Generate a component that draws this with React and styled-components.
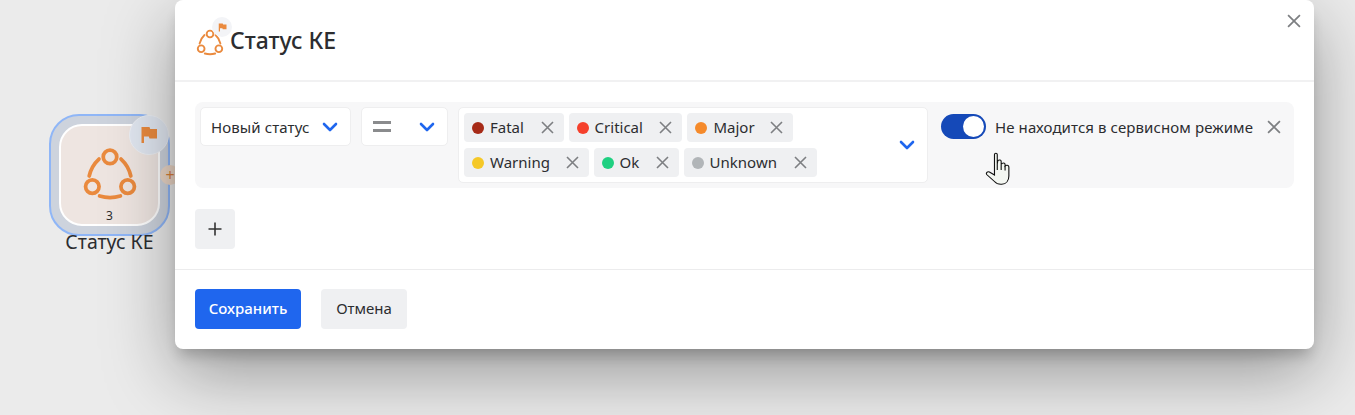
import React from "react";
import styled, { createGlobalStyle } from "styled-components";

const tags = [
  { name: "Fatal", color: "#a62a17", width: 99.6 },
  { name: "Critical", color: "#f5402c", width: 113.9 },
  { name: "Major", color: "#f58a2b", width: 106 },
  { name: "Warning", color: "#f5c827", width: 124.6 },
  { name: "Ok", color: "#1fd081", width: 85 },
  { name: "Unknown", color: "#b1b5b8", width: 133 },
];

const StatusIcon = ({ size, stroke = 3.6 }) => (
  <svg width={size} height={size} viewBox="0 0 50 50" fill="none" stroke="#ea8a3e" strokeWidth={stroke} strokeLinecap="round" overflow="visible">
    <circle cx="25" cy="11.5" r="6.5" />
    <circle cx="8" cy="40" r="6.5" />
    <circle cx="42" cy="40" r="6.5" />
    <path d="M14.4 13.5C10 17.5 6.5 23 5 29.8" />
    <path d="M35.6 13.5C40 17.5 43.5 23 45 29.8" />
    <path d="M15 49C21 50.8 29 50.8 35 49" />
  </svg>
);

const FlagIcon = ({ size }) => (
  <svg width={size} height={size} viewBox="0 0 18 18" fill="#ea8a3e">
    <path d="M1.5 1H9.5L10.2 3H17V12.5H9.5L8.8 10.5H4V17H1.5Z" />
  </svg>
);

const Chevron = () => (
  <svg width="16" height="10" viewBox="0 0 16 10" fill="none" stroke="#1f66ee" strokeWidth="2.6" strokeLinecap="round" strokeLinejoin="round">
    <path d="M2 2L8 8L14 2" />
  </svg>
);

const Cross = ({ size = 13, color = "#7d7f82" }) => (
  <svg width={size} height={size} viewBox="0 0 13 13" fill="none" stroke={color} strokeWidth="1.6">
    <path d="M1 1L12 12M12 1L1 12" />
  </svg>
);

const Hand = () => (
  <svg width="29" height="34" viewBox="0 0 26 34" preserveAspectRatio="none" fill="#f4f7f2" stroke="#111" strokeWidth="1">
    <path d="M8.5 2.5C8.5 0.8 11 0.8 11 2.5V12L11.5 8.5C13 7.6 14.5 8 14.5 9.5V12.5C15.5 10.5 18 10.5 18 12.5V14C19 12.8 21.4 13 21.4 15V24C21.4 28.5 19 32 15 32.3C11.5 32.6 10 31.5 8.5 29.5L1.5 22.5C0.6 21 2 19.2 4 20L8.5 23Z" />
    <path d="M14.5 12.5V18M18 14V18.5M11 12V18" fill="none" />
  </svg>
);

const App = () => (
  <Canvas>
    <GlobalStyle />
    <Node>
      <NodeFrame>
        <NodeCard>
          <StatusIcon size={52} stroke={3.6} />
          <NodeCount>3</NodeCount>
        </NodeCard>
        <FlagBadge>
          <FlagIcon size={18} />
        </FlagBadge>
        <AddHandle>+</AddHandle>
      </NodeFrame>
      <NodeLabel>Статус КЕ</NodeLabel>
    </Node>

    <Modal>
      <CloseButton>
        <Cross size={14} />
      </CloseButton>
      <Header>
        <TitleIcon>
          <StatusIcon size={26} />
          <SmallFlag>
            <FlagIcon size={9} />
          </SmallFlag>
        </TitleIcon>
        <Title>Статус КЕ</Title>
      </Header>

      <Body>
        <ConditionRow>
          <Select $width={151}>
            <span>Новый статус</span>
            <Chevron />
          </Select>
          <Select $width={87}>
            <EqualSign />
            <Chevron />
          </Select>
          <TagBox>
            <TagList>
              {tags.map((tag) => (
                <Tag key={tag.name} $width={tag.width}>
                  <Dot $color={tag.color} />
                  <TagName>{tag.name}</TagName>
                  <Cross />
                </Tag>
              ))}
            </TagList>
            <Chevron />
          </TagBox>
          <ToggleGroup>
            <Toggle />
            <ToggleLabel>Не находится в сервисном режиме</ToggleLabel>
            <Cross size={14} />
          </ToggleGroup>
          <Cursor>
            <Hand />
          </Cursor>
        </ConditionRow>
        <AddButton>
          <svg width="14" height="14" viewBox="0 0 14 14" stroke="#333" strokeWidth="1.6">
            <path d="M7 0.5V13.5M0.5 7H13.5" />
          </svg>
        </AddButton>
      </Body>

      <Footer>
        <SaveButton>Сохранить</SaveButton>
        <CancelButton>Отмена</CancelButton>
      </Footer>
    </Modal>
  </Canvas>
);

export default App;

const GlobalStyle = createGlobalStyle`
  html, body {
    margin: 0;
    padding: 0;
  }

  * {
    box-sizing: border-box;
  }

  body {
    font-family: "Noto Sans", "Open Sans", sans-serif;
    color: #2c2d30;
  }
`;

const Canvas = styled.div`
  position: relative;
  width: 1355px;
  height: 415px;
  overflow: hidden;
  background: #ebebeb;
`;

const Node = styled.div`
  position: absolute;
  left: 49px;
  top: 114px;
  width: 121px;
`;

const NodeFrame = styled.div`
  position: relative;
  width: 121px;
  height: 122px;
  padding: 8px;
  border: 2px solid #8fb6f7;
  border-radius: 30px;
  background: #cdd3dd;
`;

const NodeCard = styled.div`
  position: relative;
  display: flex;
  justify-content: center;
  padding-top: 19px;
  width: 101px;
  height: 102px;
  border: 2px solid #fff;
  border-radius: 23px;
  background: #eee5e1;
`;

const NodeCount = styled.span`
  position: absolute;
  left: 0;
  right: 0;
  bottom: 0;
  font-size: 12px;
  line-height: 16px;
  text-align: center;
`;

const FlagBadge = styled.div`
  position: absolute;
  right: -1px;
  top: -1px;
  width: 40px;
  height: 40px;
  display: flex;
  align-items: center;
  justify-content: center;
  border: 1px solid #edf0f5;
  border-radius: 50%;
  background: #e1e7f1;
`;

const AddHandle = styled.div`
  position: absolute;
  right: -12px;
  top: 49px;
  width: 20px;
  height: 20px;
  border-radius: 50%;
  background: #ecd7c7;
  color: #d97f3a;
  font-size: 16px;
  line-height: 20px;
  text-align: center;
`;

const NodeLabel = styled.div`
  margin-top: -6px;
  position: relative;
  font-size: 19.5px;
  line-height: 24px;
  text-align: center;
  white-space: nowrap;
`;

const Modal = styled.div`
  position: absolute;
  left: 175px;
  top: 0;
  width: 1139px;
  height: 349px;
  display: flex;
  flex-direction: column;
  border-radius: 8px;
  background: #fff;
  box-shadow: 0 10px 14px -4px rgba(0, 0, 0, 0.2), 0 24px 70px rgba(0, 0, 0, 0.36);
`;

const CloseButton = styled.div`
  position: absolute;
  right: 13px;
  top: 14px;
  display: flex;
`;

const Header = styled.div`
  display: flex;
  align-items: center;
  gap: 7px;
  height: 82px;
  padding: 0 22px;
  border-bottom: 2px solid #f1f1f2;
`;

const TitleIcon = styled.div`
  position: relative;
  display: flex;
  margin-top: 2px;
`;

const SmallFlag = styled.div`
  position: absolute;
  left: 15px;
  top: -11px;
  width: 20px;
  height: 20px;
  display: flex;
  align-items: center;
  justify-content: center;
  border-radius: 50%;
  background: #f3f4f7;
`;

const Title = styled.h1`
  margin: 0;
  font-size: 23px;
  font-weight: 500;
  line-height: 30px;
`;

const Body = styled.div`
  flex: 1;
  padding: 20px 20px 0;
  border-bottom: 1px solid #ececed;
`;

const ConditionRow = styled.div`
  position: relative;
  display: flex;
  align-items: flex-start;
  gap: 10px;
  height: 86px;
  padding: 5px;
  border-radius: 8px;
  background: #f7f7f8;
`;

const Select = styled.div`
  display: flex;
  align-items: center;
  justify-content: space-between;
  width: ${(p) => p.$width}px;
  height: 39px;
  padding: 0 12px 0 10px;
  border: 1px solid #eeeeef;
  border-radius: 5px;
  background: #fff;
  font-size: 15px;
  letter-spacing: 0.1px;
  white-space: nowrap;
`;

const EqualSign = styled.div`
  width: 18px;
  height: 11px;
  margin-left: 1px;
  border-top: 3px solid #8a8b8d;
  border-bottom: 3px solid #8a8b8d;
`;

const TagBox = styled.div`
  display: flex;
  align-items: center;
  justify-content: space-between;
  width: 470px;
  height: 76px;
  padding: 5px 12px 5px 5px;
  border: 1px solid #eeeeef;
  border-radius: 5px;
  background: #fff;
`;

const TagList = styled.div`
  display: flex;
  flex-wrap: wrap;
  gap: 6px 5px;
  width: 420px;
`;

const Tag = styled.div`
  display: flex;
  align-items: center;
  width: ${(p) => p.$width}px;
  height: 29px;
  padding: 0 10px 0 8px;
  border-radius: 4px;
  background: #eff0f2;
`;

const Dot = styled.span`
  width: 12px;
  height: 12px;
  margin-right: 6px;
  border-radius: 50%;
  background: ${(p) => p.$color};
`;

const TagName = styled.span`
  flex: 1;
  padding-bottom: 2px;
  font-size: 15px;
  line-height: 20px;
`;

const ToggleGroup = styled.div`
  display: flex;
  align-items: center;
  height: 25px;
  margin: 7px 0 0 3px;
`;

const Toggle = styled.div`
  position: relative;
  width: 45px;
  height: 25px;
  margin-right: 9px;
  border-radius: 13px;
  background: #1549b8;

  &::after {
    content: "";
    position: absolute;
    right: 2px;
    top: 2px;
    width: 21px;
    height: 21px;
    border-radius: 50%;
    background: #fff;
  }
`;

const ToggleLabel = styled.span`
  margin-right: 14px;
  font-size: 15px;
  letter-spacing: 0.1px;
  white-space: nowrap;
`;

const Cursor = styled.div`
  position: absolute;
  left: 790px;
  top: 50px;
  display: flex;
`;

const AddButton = styled.div`
  display: flex;
  align-items: center;
  justify-content: center;
  width: 40px;
  height: 40px;
  margin-top: 21px;
  border-radius: 4px;
  background: #eff0f2;
`;

const Footer = styled.div`
  display: flex;
  gap: 20px;
  height: 79px;
  padding: 19px 20px 0;
`;

const SaveButton = styled.div`
  display: flex;
  align-items: center;
  justify-content: center;
  width: 106px;
  height: 40px;
  padding-bottom: 2px;
  border-radius: 4px;
  background: #1f66ee;
  color: #fff;
  font-size: 15px;
  font-weight: 500;
`;

const CancelButton = styled(SaveButton)`
  width: 86px;
  background: #eff0f2;
  color: #2c2d30;
  font-weight: 400;
`;
